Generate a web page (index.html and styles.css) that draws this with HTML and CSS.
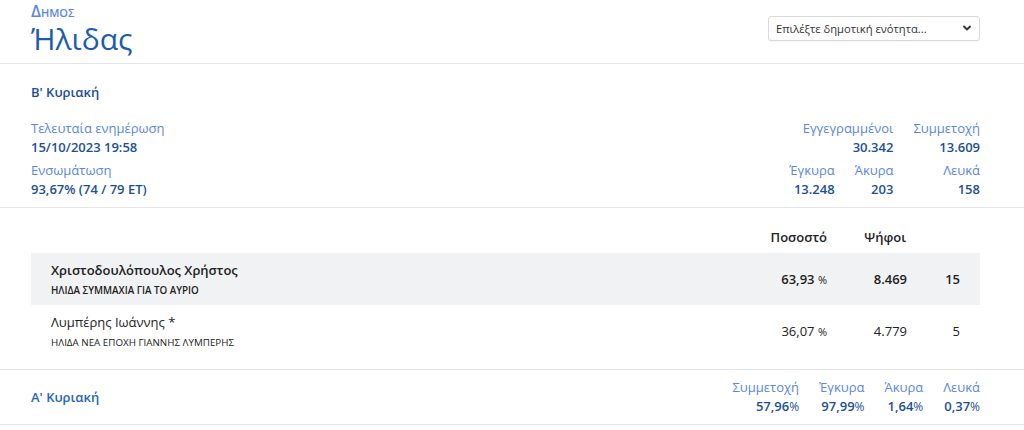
FILE: index.html
```html
<!DOCTYPE html>
<html lang="el">
<head>
  <meta charset="UTF-8">
  <title>Δήμος Ήλιδας</title>
  <link rel="stylesheet" href="styles.css">
</head>
<body>
  <header class="top">
    <div class="wrap top-inner">
      <div>
        <div class="kicker">Δημος</div>
        <h1 class="title">Ήλιδας</h1>
      </div>
      <div class="picker">
        <select>
          <option>Επιλέξτε δημοτική ενότητα...</option>
        </select>
        <svg class="chev" width="10" height="10" viewBox="0 0 10 10"><path d="M2 3.5l3 3 3-3" fill="none" stroke="#333" stroke-width="1.8" stroke-linecap="round" stroke-linejoin="round"/></svg>
      </div>
    </div>
  </header>

  <section class="round">
    <div class="wrap">
      <h2 class="round-name">Β' Κυριακή</h2>
      <div class="info">
        <div class="info-left">
          <div class="pair">
            <div class="label">Τελευταία ενημέρωση</div>
            <div class="value">15/10/2023 19:58</div>
          </div>
          <div class="pair">
            <div class="label">Ενσωμάτωση</div>
            <div class="value">93,67% (74 / 79 ΕΤ)</div>
          </div>
        </div>
        <div class="info-right">
          <div class="pair span2">
            <div class="label">Εγγεγραμμένοι</div>
            <div class="value">30.342</div>
          </div>
          <div class="pair">
            <div class="label">Συμμετοχή</div>
            <div class="value">13.609</div>
          </div>
          <div class="pair">
            <div class="label">Έγκυρα</div>
            <div class="value">13.248</div>
          </div>
          <div class="pair">
            <div class="label">Άκυρα</div>
            <div class="value">203</div>
          </div>
          <div class="pair">
            <div class="label">Λευκά</div>
            <div class="value">158</div>
          </div>
        </div>
      </div>
    </div>
  </section>

  <section class="results">
    <div class="wrap">
      <div class="row head">
        <div></div>
        <div class="num">Ποσοστό</div>
        <div class="num">Ψήφοι</div>
        <div></div>
      </div>
      <div class="row cand winner">
        <div>
          <div class="name">Χριστοδουλόπουλος Χρήστος</div>
          <div class="party">ΗΛΙΔΑ ΣΥΜΜΑΧΙΑ ΓΙΑ ΤΟ ΑΥΡΙΟ</div>
        </div>
        <div class="num">63,93 <span class="pc">%</span></div>
        <div class="num">8.469</div>
        <div class="num">15</div>
      </div>
      <div class="row cand">
        <div>
          <div class="name">Λυμπέρης Ιωάννης *</div>
          <div class="party">ΗΛΙΔΑ ΝΕΑ ΕΠΟΧΗ ΓΙΑΝΝΗΣ ΛΥΜΠΕΡΗΣ</div>
        </div>
        <div class="num">36,07 <span class="pc">%</span></div>
        <div class="num">4.779</div>
        <div class="num">5</div>
      </div>
    </div>
  </section>

  <section class="round first">
    <div class="wrap first-inner">
      <a class="round-link" href="#">Α' Κυριακή</a>
      <div class="summary">
        <div class="pair">
          <div class="label">Συμμετοχή</div>
          <div class="value">57,96<span class="pc">%</span></div>
        </div>
        <div class="pair">
          <div class="label">Έγκυρα</div>
          <div class="value">97,99<span class="pc">%</span></div>
        </div>
        <div class="pair">
          <div class="label">Άκυρα</div>
          <div class="value">1,64<span class="pc">%</span></div>
        </div>
        <div class="pair">
          <div class="label">Λευκά</div>
          <div class="value">0,37<span class="pc">%</span></div>
        </div>
      </div>
    </div>
  </section>
</body>
</html>
```

FILE: styles.css
```css
:root {
  --title: #1a5cb0;
  --label: #5b86e0;
  --value: #1d4f98;
  --link: #2567b6;
  --text: #222;
  --line: #e6e6e6;
}
body {
  margin: 0;
  font-family: "Open Sans", "Noto Sans", sans-serif;
  font-size: 13px;
  color: var(--text);
  background: #fff;
}
.wrap {
  padding: 0 44px 0 31px;
}
.top {
  border-bottom: 1px solid var(--line);
  padding: 1px 0 6px;
}
.top-inner {
  display: flex;
  justify-content: space-between;
  align-items: flex-start;
}
.kicker {
  font-variant: small-caps;
  font-weight: 600;
  font-size: 16px;
  line-height: 20px;
  color: var(--label);
}
.title {
  margin: 0;
  font-size: 30px;
  font-weight: 500;
  line-height: 36px;
  color: var(--title);
}
.picker {
  position: relative;
  margin-top: 15px;
}
.picker select {
  appearance: none;
  width: 212px;
  height: 25px;
  padding: 0 24px 0 7px;
  font-family: inherit;
  font-size: 11.2px;
  color: #333;
  background: #fff;
  border: 1px solid #d7d9dc;
  border-radius: 3px;
  box-shadow: 0 1px 1px rgba(0,0,0,0.04);
}
.chev {
  position: absolute;
  right: 8px;
  top: 7px;
  pointer-events: none;
}
.round {
  border-bottom: 1px solid var(--line);
}
.round-name {
  margin: 0;
  padding: 18px 0 17px;
  font-size: 13px;
  font-weight: 600;
  line-height: 20px;
  color: var(--value);
}
.info {
  display: flex;
  justify-content: space-between;
  padding-bottom: 8px;
}
.info-left {
  display: flex;
  flex-direction: column;
  gap: 4px;
}
.info-right {
  display: grid;
  grid-template-columns: auto auto auto;
  column-gap: 20px;
  row-gap: 4px;
  text-align: right;
}
.span2 {
  grid-column: 1 / 3;
}
.label {
  line-height: 19px;
  color: var(--label);
}
.value {
  line-height: 19px;
  font-weight: 600;
  color: var(--value);
}
.results {
  border-bottom: 1px solid var(--line);
  padding: 20px 0 12px;
}
.row {
  display: grid;
  grid-template-columns: 1fr 90px 80px 53px;
  padding: 0 20px;
  align-items: center;
}
.head {
  font-weight: 600;
  line-height: 18px;
  padding-bottom: 7px;
}
.num {
  text-align: right;
}
.head .num:nth-child(3) {
  padding-right: 1px;
}
.cand {
  height: 52px;
}
.winner {
  background: #f1f2f4;
  font-weight: 600;
}
.name {
  line-height: 19px;
}
.party {
  font-size: 9.8px;
  line-height: 14px;
  margin-top: 4px;
}
.pc {
  font-weight: 400;
  font-size: 11px;
}
.first {
  padding: 8px 0;
}
.first-inner {
  display: flex;
  justify-content: space-between;
  align-items: center;
}
.round-link {
  font-weight: 600;
  color: var(--link);
  text-decoration: none;
}
.summary {
  display: flex;
  gap: 20px;
  text-align: right;
}
.summary .value .pc {
  font-size: 12px;
}
```
